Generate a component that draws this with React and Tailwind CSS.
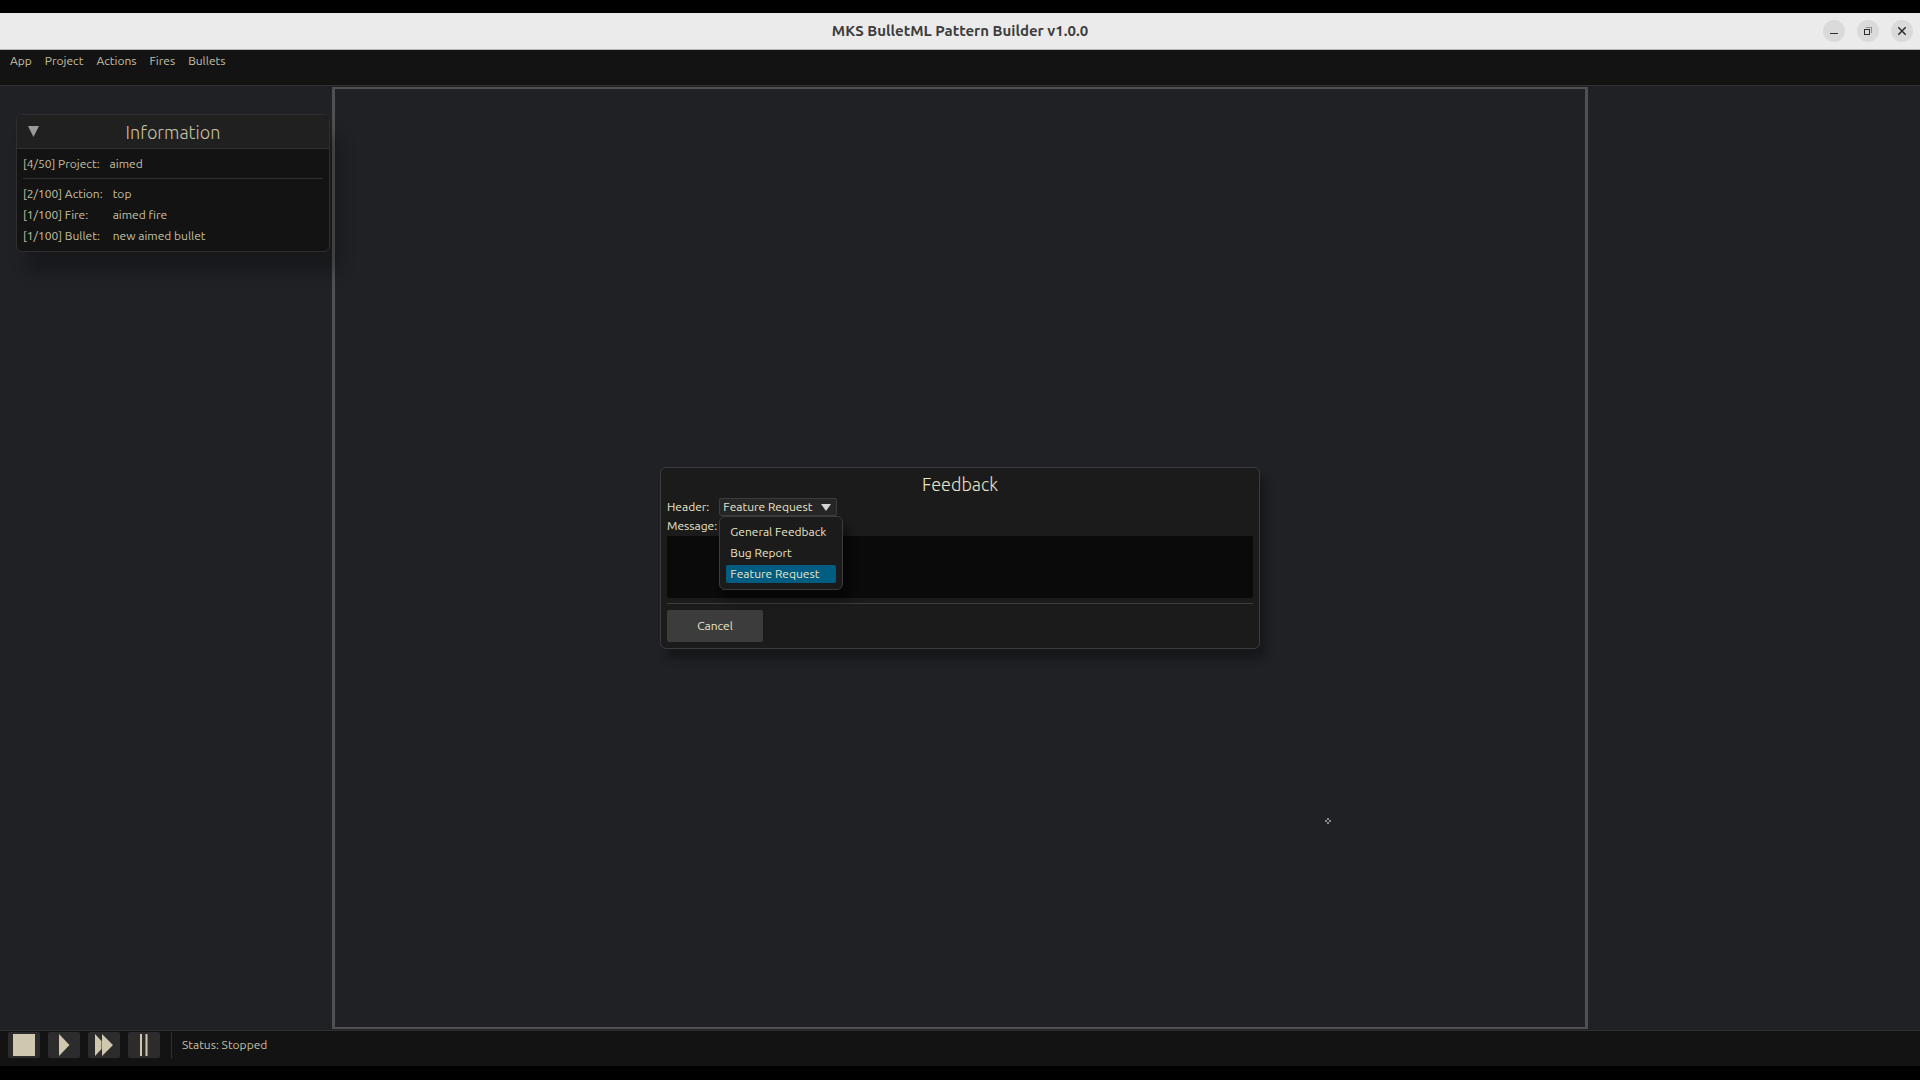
import { useState } from "react";

const menus = ["App", "Project", "Actions", "Fires", "Bullets"];

const counters = [
  { label: "[2/100] Action:", value: "top" },
  { label: "[1/100] Fire:", value: "aimed fire" },
  { label: "[1/100] Bullet:", value: "new aimed bullet" },
];

const headers = ["General Feedback", "Bug Report", "Feature Request"];

const TitleBar = () => {
  return (
    <header className="grid h-[37px] grid-cols-[1fr_auto_1fr] items-center border-b border-[#b4b4b4] bg-[#ebebeb] px-[7px]">
      <h1 className="col-start-2 pt-px text-[15px] font-bold text-[#3d3d3d]">
        MKS BulletML Pattern Builder v1.0.0
      </h1>
      <div className="flex justify-end gap-3">
        <button aria-label="Minimize" className="flex size-[22px] items-center justify-center rounded-full bg-[#dadada]">
          <svg width="22" height="22" viewBox="0 0 22 22" shapeRendering="crispEdges">
            <rect x="7" y="13" width="8" height="1" fill="#2e2e2e" />
          </svg>
        </button>
        <button aria-label="Restore" className="flex size-[22px] items-center justify-center rounded-full bg-[#dadada]">
          <svg width="22" height="22" viewBox="0 0 22 22" fill="none" shapeRendering="crispEdges">
            <path d="M9 7.5h5.500v5.500" stroke="#8e8e8e" />
            <rect x="7.500" y="9.500" width="5" height="5" stroke="#2e2e2e" />
          </svg>
        </button>
        <button aria-label="Close" className="flex size-[22px] items-center justify-center rounded-full bg-[#dadada]">
          <svg width="22" height="22" viewBox="0 0 22 22" fill="none">
            <path d="M7.300 7.300l7.400 7.400M14.700 7.300l-7.400 7.400" stroke="#2e2e2e" strokeWidth="1.500" />
          </svg>
        </button>
      </div>
    </header>
  );
};

const Information = () => {
  return (
    <section className="ml-4 mr-[2px] mt-7 rounded-md border border-[#2f2f2f] bg-[#131313] shadow-[10px_20px_15px_rgba(0,0,0,0.25)]">
      <div className="grid h-[34px] grid-cols-[32px_1fr_32px] items-center rounded-t-md border-b border-[#2f2f2f] bg-[#202020]">
        <button aria-label="Collapse" className="flex justify-center">
          <svg width="11" height="11" viewBox="0 0 11 11">
            <path d="M0 0h11L5.500 11z" fill="#9a9a9a" />
          </svg>
        </button>
        <h2 className="text-center text-[18px] font-light leading-[22px]">Information</h2>
      </div>
      <div className="px-[6px] pb-[5px] pt-1 leading-[21px]">
        <dl className="flex gap-[10px] border-b border-[#2f2f2f] pb-1">
          <dt>[4/50] Project:</dt>
          <dd>aimed</dd>
        </dl>
        <dl className="grid grid-cols-[auto_1fr] gap-x-[10px] pt-1">
          {counters.map((el) => (
            <div key={el.label} className="contents">
              <dt>{el.label}</dt>
              <dd>{el.value}</dd>
            </div>
          ))}
        </dl>
      </div>
    </section>
  );
};

const Feedback = () => {
  const [header, setHeader] = useState("Feature Request");

  return (
    <div
      role="dialog"
      aria-labelledby="feedback-title"
      className="flex w-[600px] flex-col rounded-md border border-[#3c3c3c] bg-[#1b1b1b] px-[6px] pb-[6px] pt-[5px] text-[#eae5c8] shadow-[6px_10px_8px_rgba(0,0,0,0.3)]"
    >
      <h2 id="feedback-title" className="mb-[3px] text-center text-[18px] font-light leading-[22px]">Feedback</h2>
      <div className="flex items-center gap-[10px]">
        <label htmlFor="header">Header:</label>
        <div className="relative">
          <select
            id="header"
            value={header}
            onChange={(e) => setHeader(e.target.value)}
            className="block h-[18px] w-[118px] appearance-none rounded-xs border border-[#3c3c3c] bg-[#262626] pl-[3px] leading-4"
          >
            {headers.map((el) => (
              <option key={el}>{el}</option>
            ))}
          </select>
          <svg className="pointer-events-none absolute right-[6px] top-[6px]" width="10" height="7" viewBox="0 0 10 7">
            <path d="M0 0h10L5 7z" fill="#d4d4d4" />
          </svg>
          {/* Opened list */}
          <ul className="absolute left-0 top-[18px] z-10 flex w-[124px] flex-col gap-[3px] rounded-md border border-[#3c3c3c] bg-[#1b1b1b] p-[6px] shadow-[6px_10px_8px_rgba(0,0,0,0.4)]">
            {headers.map((el) => (
              <li key={el}>
                <button
                  onClick={() => setHeader(el)}
                  className={`block h-[18px] w-full whitespace-nowrap rounded-xs pl-1 text-left leading-[18px] ${
                    el === header ? "bg-[#005c80]" : ""
                  }`}
                >
                  {el}
                </button>
              </li>
            ))}
          </ul>
        </div>
      </div>
      <label htmlFor="message" className="my-px leading-[18px]">Message:</label>
      <textarea id="message" className="block h-[62px] w-full resize-none rounded-xs bg-[#0a0a0a] p-1 outline-none" />
      <hr className="mb-[6px] mt-[5px] border-[#3c3c3c]" />
      <button className="h-8 w-24 rounded-xs bg-[#3c3c3c]">Cancel</button>
    </div>
  );
};

const Transport = () => {
  return (
    <footer className="flex h-9 items-start border-t border-[#2f2f2f] bg-[#131313] pl-2 pt-px">
      <div className="flex gap-2 border-r border-[#2f2f2f] pr-[11px]">
        <button aria-label="Stop" className="h-[26px] w-8 rounded-xs bg-[#2c2c2c]">
          <svg width="32" height="26" viewBox="0 0 32 26">
            <rect x="5" y="2" width="22" height="22" fill="#cfc8ae" />
          </svg>
        </button>
        <button aria-label="Play" className="h-[26px] w-8 rounded-xs bg-[#2c2c2c]">
          <svg width="32" height="26" viewBox="0 0 32 26">
            <path d="M11 2l10.500 11L11 24z" fill="#cfc8ae" />
          </svg>
        </button>
        <button aria-label="Fast forward" className="h-[26px] w-8 rounded-xs bg-[#2c2c2c]">
          <svg width="32" height="26" viewBox="0 0 32 26">
            <path d="M7 2l6.500 7v8L7 24zM14 2l11 11L14 24z" fill="#cfc8ae" />
          </svg>
        </button>
        <button aria-label="Pause" className="h-[26px] w-8 rounded-xs bg-[#2c2c2c]">
          <svg width="32" height="26" viewBox="0 0 32 26" fill="#cfc8ae">
            <rect x="12" y="2" width="2" height="22" />
            <rect x="17.500" y="2" width="2" height="22" />
          </svg>
        </button>
      </div>
      <p className="pl-[10px] leading-[26px]">Status: Stopped</p>
    </footer>
  );
};

const App = () => {
  return (
    <div className="flex min-h-screen flex-col bg-black pb-[14px] pt-[13px] font-['Ubuntu','Noto_Sans',sans-serif] text-[12px] text-[#c6c0a5]">
      <TitleBar />
      <div className="relative flex flex-1 flex-col">
        <nav className="flex h-9 gap-[13px] border-b border-[#2f2f2f] bg-[#131313] pl-[10px] leading-[22px]">
          {menus.map((el) => (
            <button key={el} className="h-[22px]">{el}</button>
          ))}
        </nav>

        <main className="grid flex-1 grid-cols-[332px_1fr_332px] bg-[#202125]">
          <aside className="relative z-10">
            <Information />
          </aside>
          <div className="my-px border-x-3 border-y-2 border-[#505053]">
            {/* Mouse position on the stage */}
            <svg className="size-full" shapeRendering="crispEdges">
              <g fill="#8a8a8a">
                <rect x="992" y="729" width="2" height="2" />
                <rect x="992" y="733" width="2" height="2" />
                <rect x="990" y="731" width="2" height="2" />
                <rect x="994" y="731" width="2" height="2" />
              </g>
            </svg>
          </div>
        </main>

        <Transport />

        <div className="absolute inset-0 z-20 flex items-center justify-center">
          <Feedback />
        </div>
      </div>
    </div>
  );
};

export default App;
